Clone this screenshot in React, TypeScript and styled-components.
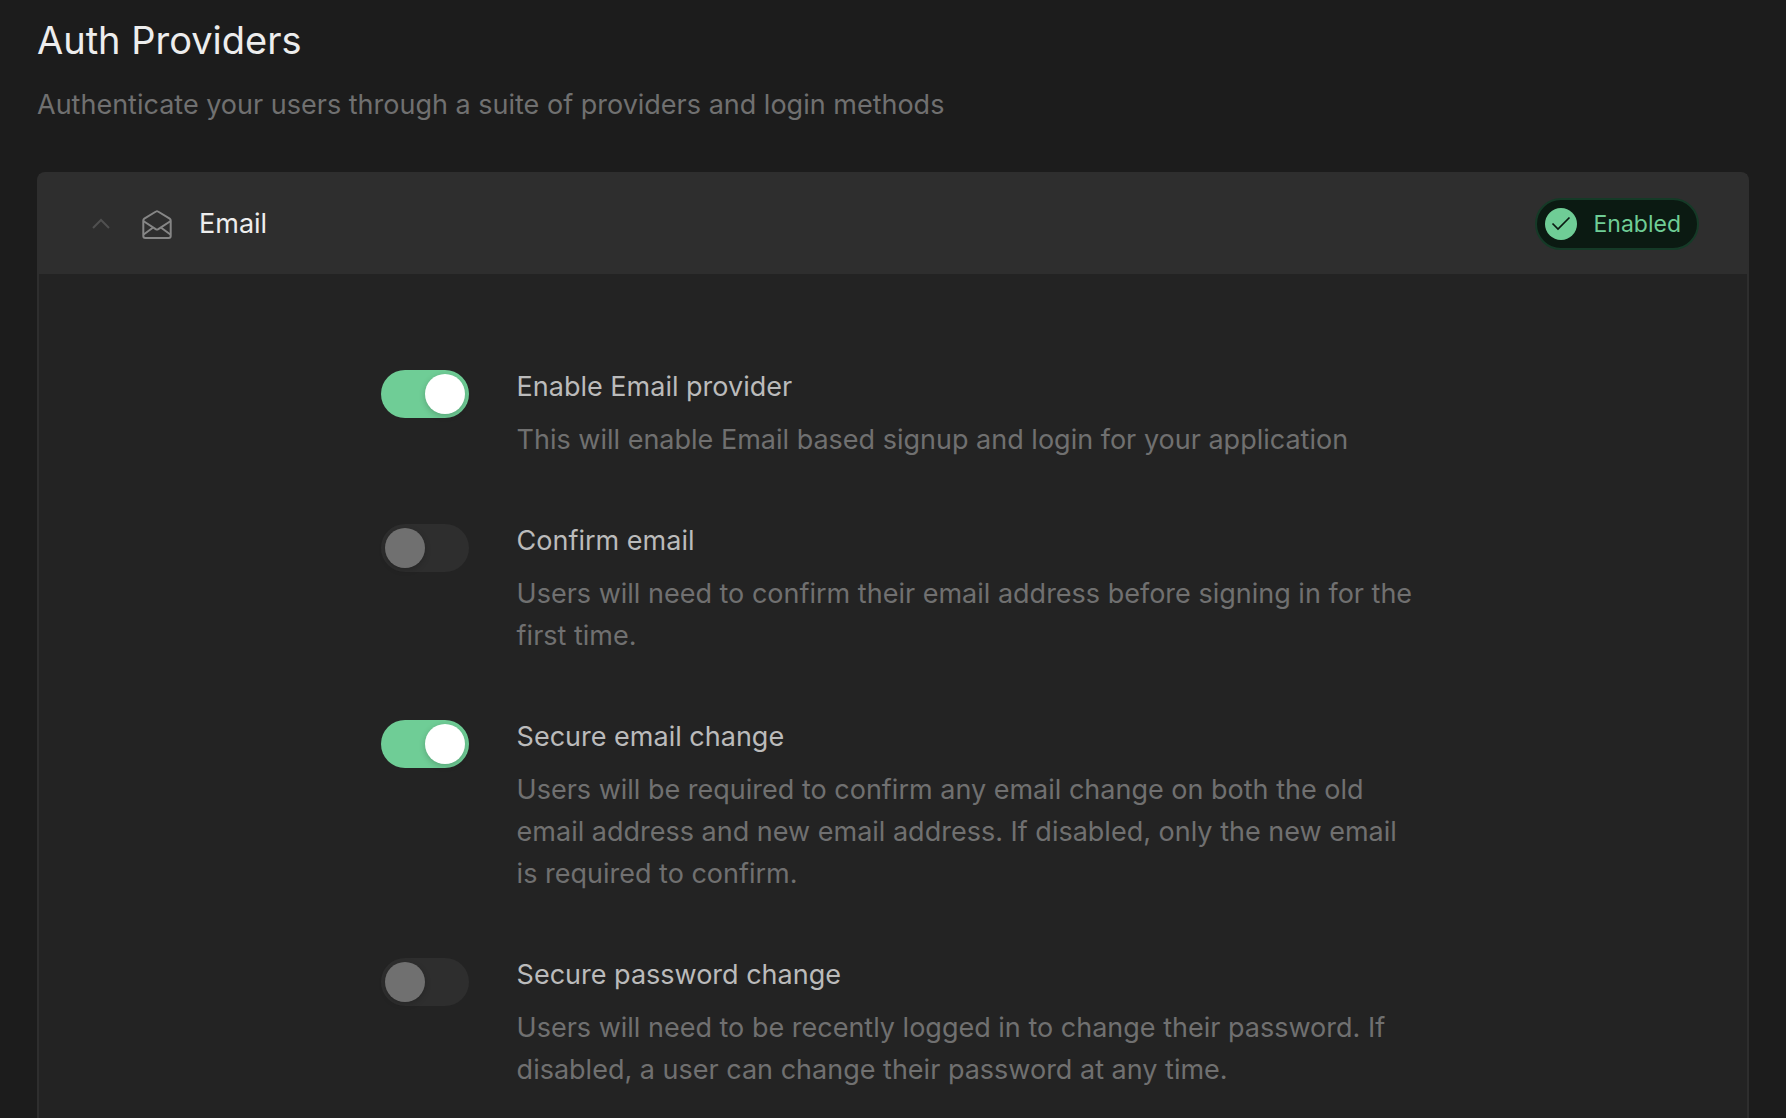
import { useState } from "react";
import styled, { createGlobalStyle } from "styled-components";

const GlobalStyle = createGlobalStyle`
  *, *::before, *::after { box-sizing: border-box; }
  body {
    margin: 0;
    background: #1c1c1c;
    font-family: Inter, "Liberation Sans", sans-serif;
    -webkit-font-smoothing: antialiased;
  }
`;

const Page = styled.main`
  min-height: 100vh;
  display: flex;
  flex-direction: column;
  padding: 16px 37px 0;
`;

const Title = styled.h1`
  margin: 0;
  font-size: 38px;
  line-height: 48px;
  font-weight: 400;
  color: #ededed;
`;

const Subtitle = styled.p`
  margin: 20px 0 46px;
  font-size: 27px;
  line-height: 42px;
  color: #707070;
`;

const Card = styled.section`
  flex: 1;
  border: 2px solid #2e2e2e;
  border-bottom: 0;
  border-radius: 8px 8px 0 0;
  background: #232323;
`;

const CardHeader = styled.button`
  width: 100%;
  height: 100px;
  display: flex;
  align-items: center;
  border: 0;
  padding: 0 48px;
  background: #2e2e2e;
  color: #ededed;
  font: inherit;
  font-size: 27px;
  line-height: 42px;
  text-align: left;
  cursor: pointer;
`;

const ProviderName = styled.span`
  flex: 1;
  margin-left: 27px;
`;

const ChevronIcon = styled.svg`
  width: 28px;
  height: 28px;
  color: #505050;
`;

const MailIcon = styled.svg`
  width: 30px;
  height: 32px;
  margin-left: 27px;
  color: #868686;
`;

const Badge = styled.span`
  display: flex;
  align-items: center;
  gap: 17px;
  height: 52px;
  padding: 0 16px 0 8px;
  border: 2px solid #153a27;
  border-radius: 26px;
  background: #0b1a12;
  color: #6fcd96;
  font-size: 23px;
  line-height: 32px;
`;

const BadgeIcon = styled.svg`
  width: 32px;
  height: 32px;
`;

const CardBody = styled.div<{ $open: boolean }>`
  display: ${(p) => (p.$open ? "flex" : "none")};
  flex-direction: column;
  gap: 59px;
  padding: 92px calc(20% - 12px) 36px 20%;
`;

const Row = styled.div`
  display: flex;
  align-items: flex-start;
  gap: 48px;
`;

const Toggle = styled.input`
  appearance: none;
  flex: none;
  width: 88px;
  height: 48px;
  margin: 4px 0 0;
  padding: 4px;
  border-radius: 24px;
  background: #2e2e2e;
  cursor: pointer;

  &::before {
    content: "";
    display: block;
    width: 40px;
    height: 40px;
    border-radius: 50%;
    background: #707070;
    box-shadow: 0 2px 6px rgba(0, 0, 0, 0.2);
  }

  &:checked {
    background: #6fcd96;
  }

  &:checked::before {
    margin-left: 40px;
    background: #ffffff;
  }
`;

const RowText = styled.div`
  flex: 1;
`;

const RowLabel = styled.label`
  display: block;
  font-size: 27px;
  line-height: 42px;
  color: #bbbbbb;
`;

const RowDescription = styled.p`
  margin: 11px 0 0;
  font-size: 27px;
  line-height: 42px;
  color: #707070;
`;

const settings = [
  {
    id: "enable-email",
    label: "Enable Email provider",
    description: "This will enable Email based signup and login for your application",
    enabled: true,
  },
  {
    id: "confirm-email",
    label: "Confirm email",
    description: "Users will need to confirm their email address before signing in for the first time.",
    enabled: false,
  },
  {
    id: "secure-email",
    label: "Secure email change",
    description:
      "Users will be required to confirm any email change on both the old email address and new email address. If disabled, only the new email is required to confirm.",
    enabled: true,
  },
  {
    id: "secure-password",
    label: "Secure password change",
    description:
      "Users will need to be recently logged in to change their password. If disabled, a user can change their password at any time.",
    enabled: false,
  },
];

export default function App() {
  const [open, setOpen] = useState(true);

  return (
    <>
      <GlobalStyle />
      <Page>
        <Title>Auth Providers</Title>
        <Subtitle>Authenticate your users through a suite of providers and login methods</Subtitle>
        <Card>
          <CardHeader type="button" aria-expanded={open} onClick={() => setOpen(!open)}>
            <ChevronIcon viewBox="0 0 28 28" fill="none" stroke="currentColor" strokeWidth="2" aria-hidden="true">
              <path d="M6 18l8-8 8 8" />
            </ChevronIcon>
            <MailIcon
              viewBox="0 -2 30 32"
              fill="none"
              stroke="currentColor"
              strokeWidth="2"
              strokeLinejoin="round"
              aria-hidden="true"
            >
              <path d="M1.3 10.4c0-.8.4-1.4 1-1.8L14 1.500c.6-.4 1.400-.4 2 0l11.700 7.100c.6.4 1 1 1 1.800V26c0 1.100-.9 2-2 2H3.300c-1.100 0-2-.9-2-2z" />
              <path d="M1.300 11l12.400 8.200c.8.5 1.800.5 2.600 0L28.700 11M1.300 24.800l9.500-7M28.700 24.800l-9.500-7" />
            </MailIcon>
            <ProviderName>Email</ProviderName>
            <Badge>
              <BadgeIcon viewBox="0 0 32 32" fill="none" aria-hidden="true">
                <circle cx="16" cy="16" r="16" fill="#6fcd96" />
                <path d="M7.500 15.500l5.500 5.500L24.500 9.500" stroke="#0b1a12" strokeWidth="1.7" />
              </BadgeIcon>
              Enabled
            </Badge>
          </CardHeader>
          <CardBody $open={open}>
            {settings.map((s) => (
              <Row key={s.id}>
                <Toggle
                  type="checkbox"
                  role="switch"
                  id={s.id}
                  defaultChecked={s.enabled}
                  aria-describedby={`${s.id}-text`}
                />
                <RowText>
                  <RowLabel htmlFor={s.id}>{s.label}</RowLabel>
                  <RowDescription id={`${s.id}-text`}>{s.description}</RowDescription>
                </RowText>
              </Row>
            ))}
          </CardBody>
        </Card>
      </Page>
    </>
  );
}
